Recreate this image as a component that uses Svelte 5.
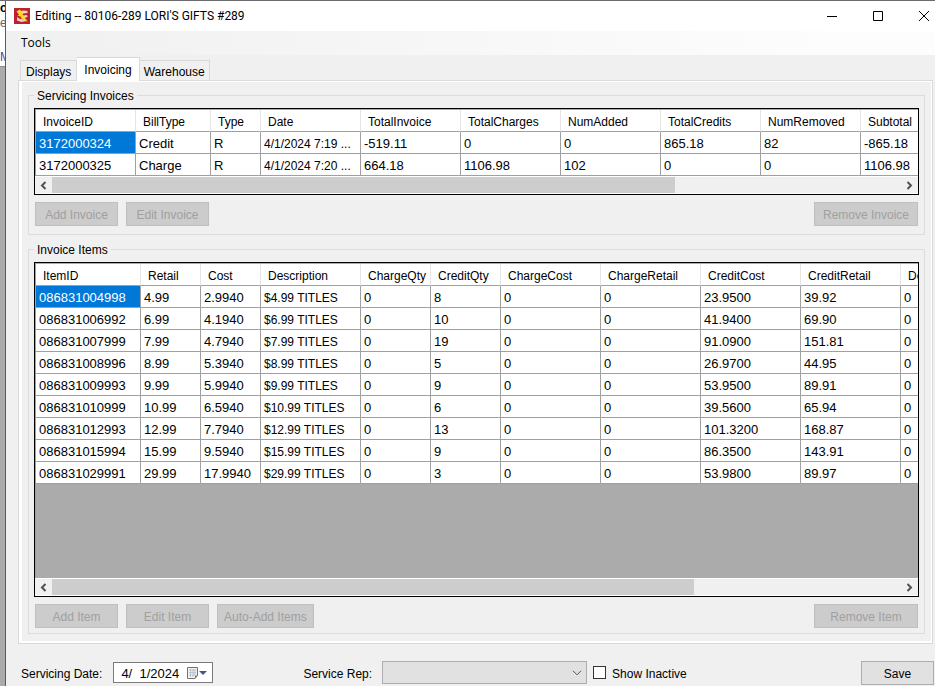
<script>
  let showInactive = $state(false);
  let servicingDate = $state("4/  1/2024");
  let activeTab = $state("Invoicing");

  const tabs = ["Displays", "Invoicing", "Warehouse"];

  const invoices = {
    label: "Servicing Invoices",
    thumb: 73.4,
    columns: [
      ["InvoiceID", 100],
      ["BillType", 75],
      ["Type", 50],
      ["Date", 100],
      ["TotalInvoice", 100],
      ["TotalCharges", 100],
      ["NumAdded", 100],
      ["TotalCredits", 100],
      ["NumRemoved", 100],
      ["Subtotal", 100],
    ],
    rows: [
      ["3172000324", "Credit", "R", "4/1/2024 7:19 ...", "-519.11", "0", "0", "865.18", "82", "-865.18"],
      ["3172000325", "Charge", "R", "4/1/2024 7:20 ...", "664.18", "1106.98", "102", "0", "0", "1106.98"],
    ],
    actions: ["Add Invoice", "Edit Invoice"],
    remove: "Remove Invoice",
  };

  const items = {
    label: "Invoice Items",
    thumb: 75.6,
    columns: [
      ["ItemID", 105],
      ["Retail", 60],
      ["Cost", 60],
      ["Description", 100],
      ["ChargeQty", 70],
      ["CreditQty", 70],
      ["ChargeCost", 100],
      ["ChargeRetail", 100],
      ["CreditCost", 100],
      ["CreditRetail", 100],
      ["De", 100],
    ],
    rows: [
      ["086831004998", "4.99", "2.9940", "$4.99 TITLES", "0", "8", "0", "0", "23.9500", "39.92", "0"],
      ["086831006992", "6.99", "4.1940", "$6.99 TITLES", "0", "10", "0", "0", "41.9400", "69.90", "0"],
      ["086831007999", "7.99", "4.7940", "$7.99 TITLES", "0", "19", "0", "0", "91.0900", "151.81", "0"],
      ["086831008996", "8.99", "5.3940", "$8.99 TITLES", "0", "5", "0", "0", "26.9700", "44.95", "0"],
      ["086831009993", "9.99", "5.9940", "$9.99 TITLES", "0", "9", "0", "0", "53.9500", "89.91", "0"],
      ["086831010999", "10.99", "6.5940", "$10.99 TITLES", "0", "6", "0", "0", "39.5600", "65.94", "0"],
      ["086831012993", "12.99", "7.7940", "$12.99 TITLES", "0", "13", "0", "0", "101.3200", "168.87", "0"],
      ["086831015994", "15.99", "9.5940", "$15.99 TITLES", "0", "9", "0", "0", "86.3500", "143.91", "0"],
      ["086831029991", "29.99", "17.9940", "$29.99 TITLES", "0", "3", "0", "0", "53.9800", "89.97", "0"],
    ],
    actions: ["Add Item", "Edit Item", "Auto-Add Items"],
    remove: "Remove Item",
  };

  // long text columns use the smaller size
  const compact = ["Date", "Description"];

  const tableWidth = (columns) => columns.reduce((sum, c) => sum + c[1], 0);
</script>

{#snippet group(data, fill)}
  <fieldset class:fill>
    <legend>{data.label}</legend>
    <div class="grid" class:fill>
      <div class="viewport">
        <table style="width: {tableWidth(data.columns)}px">
          <colgroup>
            {#each data.columns as [name, width] (name)}
              <col style="width: {width}px" />
            {/each}
          </colgroup>
          <thead>
            <tr>
              {#each data.columns as [name] (name)}
                <th>{name}</th>
              {/each}
            </tr>
          </thead>
          <tbody>
            {#each data.rows as row, r}
              <tr>
                {#each row as cell, c}
                  <td
                    class:selected={r === 0 && c === 0}
                    class:compact={compact.includes(data.columns[c][0])}>{cell}</td
                  >
                {/each}
              </tr>
            {/each}
          </tbody>
        </table>
      </div>
      <div class="scrollbar">
        <button class="arrow" aria-label="Scroll left">
          <svg width="7" height="9" viewBox="0 0 7 9"><path d="M5.500 1 2 4.500 5.500 8" /></svg>
        </button>
        <div class="track">
          <div class="thumb" style="width: {data.thumb}%"></div>
        </div>
        <button class="arrow" aria-label="Scroll right">
          <svg width="7" height="9" viewBox="0 0 7 9"><path d="M1.500 1 5 4.500 1.500 8" /></svg>
        </button>
      </div>
    </div>
    <div class="actions">
      {#each data.actions as action (action)}
        <button class="btn" disabled>{action}</button>
      {/each}
      <button class="btn remove" disabled>{data.remove}</button>
    </div>
  </fieldset>
{/snippet}

<div class="desktop">
  <div class="behind" aria-hidden="true">
    <div class="paper">
      <b>o</b>
      <span class="dim">es</span>
      <span class="blue">Ma</span>
    </div>
  </div>

  <div class="window">
    <header class="titlebar">
      <svg class="logo" width="16" height="16" viewBox="0 0 16 16">
        <rect width="16" height="16" fill="#b8242a" />
        <path
          d="M6 3.500 9 2.500l4.500.500v2L9 5.500zM9 7.500l4-.5.500 2-3 .5zM3 9l3 2 6.500.5v1.500l-5 1-4.500-1.500z"
          fill="#f0cfca"
        />
        <path
          d="M2.500 3.500 6 1.500 9.500 6 8.500 6.500 12 10l-1 .5 3 3.500-7.500-4 1-1L3.500 7.500 5 6.500z"
          fill="#ffd91f"
        />
      </svg>
      <h1>Editing -- 80106-289 LORI'S GIFTS #289</h1>
      <div class="controls">
        <button aria-label="Minimize">
          <svg width="10" height="10" viewBox="0 0 10 10"><path d="M0 5.500h10" /></svg>
        </button>
        <button aria-label="Maximize">
          <svg width="10" height="10" viewBox="0 0 10 10"><path d="M.5.5h9v9h-9z" /></svg>
        </button>
        <button aria-label="Close">
          <svg width="10" height="10" viewBox="0 0 10 10"><path d="m0 0 10 10M10 0 0 10" /></svg>
        </button>
      </div>
    </header>

    <nav class="menu">
      <button>Tools</button>
    </nav>

    <div class="tabs" role="tablist">
      {#each tabs as tab (tab)}
        <button
          role="tab"
          class="tab"
          class:active={tab === activeTab}
          aria-selected={tab === activeTab}
          onclick={() => (activeTab = tab)}>{tab}</button
        >
      {/each}
    </div>

    <main class="panel">
      {@render group(invoices, false)}
      {@render group(items, true)}
    </main>

    <footer>
      <label for="date">Servicing Date:</label>
      <div class="datebox">
        <input id="date" type="text" bind:value={servicingDate} />
        <button aria-label="Open calendar">
          <svg width="22" height="14" viewBox="0 0 22 14">
            <path d="M1.500 1.500h10v8l-2.500 3H1.500z" fill="#f4f4f4" stroke="#766c6c" />
            <path d="M3 4h7M3 6.500h7M3 9h6M4.500 3v8M7 3v8M9 3v6" fill="none" stroke="#b9c2d0" />
            <path d="M9 12.500v-3h2.500z" fill="#766c6c" />
            <path d="M13 5h8l-4 4z" fill="#3f5a87" />
          </svg>
        </button>
      </div>
      <label class="rep" for="rep">Service Rep:</label>
      <div class="combo">
        <select id="rep"><option></option></select>
        <svg width="10" height="6" viewBox="0 0 10 6"><path d="m1 .8 4 4 4-4" /></svg>
      </div>
      <input id="inactive" type="checkbox" bind:checked={showInactive} />
      <label for="inactive">Show Inactive</label>
      <button class="btn save">Save</button>
    </footer>
  </div>
</div>

<style>
  :global(body) {
    margin: 0;
    background: #f0f0f0;
  }
  * {
    box-sizing: border-box;
  }
  button,
  input,
  select {
    font: inherit;
    color: inherit;
    margin: 0;
  }
  svg {
    display: block;
  }
  .desktop {
    display: flex;
    min-height: 100vh;
    border-top: 1px solid #6b6b6b;
    font: 12px/15px "Liberation Sans", Arial, sans-serif;
    color: #000;
  }
  .behind {
    flex: none;
    width: 6px;
    overflow: hidden;
    background: #ababab;
    border-right: 1px solid #5a5a5a;
  }
  .paper {
    display: flex;
    flex-direction: column;
    height: 66px;
    background: #fff;
    border-bottom: 1px solid #8a8a8a;
  }
  .paper .dim {
    color: #666;
  }
  .paper .blue {
    margin-top: 19px;
    color: #4a4a9c;
  }
  .window {
    flex: 1;
    min-width: 0;
    display: flex;
    flex-direction: column;
    background: #f0f0f0;
  }

  .titlebar {
    display: flex;
    align-items: center;
    height: 30px;
    padding-left: 8px;
    background: #fff;
  }
  h1 {
    flex: 1;
    margin: 0 0 0 5px;
    font-family: Roboto, "Segoe UI", sans-serif;
    font-size: 12px;
    font-weight: 400;
    white-space: nowrap;
  }
  .controls {
    display: flex;
  }
  .controls button {
    display: flex;
    align-items: center;
    justify-content: center;
    width: 46px;
    height: 28px;
    padding: 0;
    border: 0;
    background: none;
  }
  .controls button:last-child {
    width: 34px;
    padding-left: 11px;
  }
  .controls path {
    fill: none;
    stroke: #000;
  }

  .menu {
    height: 24px;
    padding-left: 11px;
    background: linear-gradient(to right, #f0f0f0, #fdfdfd 90%);
    font-family: "Open Sans", "Segoe UI", sans-serif;
  }
  .menu button {
    height: 24px;
    padding: 0 4px 2px;
    border: 0;
    background: none;
  }

  .tabs {
    display: flex;
    align-items: flex-end;
    height: 25px;
    padding-left: 14px;
  }
  .tab {
    height: 20px;
    padding: 3px 5px 0;
    border: 1px solid #d9d9d9;
    border-bottom: 0;
    background: #f0f0f0;
  }
  .tab + .tab {
    border-left: 0;
    padding: 3px 4px 0;
  }
  .tab.active {
    z-index: 1;
    height: 24px;
    margin-bottom: -1px;
    padding: 2px 7px 0;
    background: #fff;
  }

  .panel {
    flex: 1;
    display: flex;
    flex-direction: column;
    gap: 7px;
    margin: 0 2px 0 12px;
    padding: 7px 7px 9px 9px;
    border: 1px solid #d9d9d9;
    box-shadow:
      inset 3px 0 #fff,
      inset -1px 1px #fff,
      inset 0 -2px #fff;
  }
  fieldset {
    display: flex;
    flex-direction: column;
    gap: 7px;
    min-width: 0;
    margin: 0;
    padding: 5px 5px 8px;
    border: 1px solid #dcdcdc;
  }
  fieldset.fill {
    flex: 1;
    padding-bottom: 5px;
  }
  legend {
    padding: 2px 3px 0;
    line-height: 13px;
  }
  .grid {
    display: flex;
    flex-direction: column;
    border: 1px solid #000;
    background: #ababab;
  }
  .grid.fill {
    flex: 1;
  }
  .viewport {
    flex: 1;
    overflow: hidden;
    padding-top: 1px;
    border-left: 1px solid #a0a0a0;
  }
  table {
    table-layout: fixed;
    border-collapse: separate;
    border-spacing: 0;
    background: #fff;
    font-size: 13px;
  }
  th,
  td {
    height: 22px;
    padding: 2px 0 0 3px;
    border-right: 1px solid #a0a0a0;
    border-bottom: 1px solid #a0a0a0;
    overflow: hidden;
    text-align: left;
    white-space: nowrap;
  }
  th,
  .compact {
    padding-top: 4px;
    font-size: 12px;
  }
  th {
    padding-left: 7px;
    border-right-color: #e5e5e5;
    font-weight: 400;
  }
  .selected {
    background: #0078d7;
    color: #fff;
  }
  .scrollbar {
    display: flex;
    height: 18px;
    border-top: 1px solid #fff;
    border-bottom: 1px solid #fff;
    background: #f0f0f0;
  }
  .arrow {
    display: flex;
    align-items: center;
    justify-content: center;
    width: 17px;
    padding: 0;
    border: 0;
    background: none;
  }
  .arrow path {
    fill: none;
    stroke: #505050;
    stroke-width: 2;
  }
  .track {
    flex: 1;
  }
  .thumb {
    height: 100%;
    background: #cdcdcd;
  }
  .actions {
    display: flex;
    gap: 8px;
    padding: 0 1px;
  }
  .btn {
    min-width: 83px;
    height: 24px;
    padding: 3px 6px 0;
    border: 1px solid #adadad;
    background: #e1e1e1;
    white-space: nowrap;
  }
  .btn:disabled {
    border-color: #bfbfbf;
    background: #ccc;
    color: #a0a0a0;
  }
  .remove {
    width: 104px;
    margin-left: auto;
  }

  footer {
    display: flex;
    align-items: center;
    height: 42px;
    padding: 15px 1px 0 15px;
  }
  footer label {
    padding-top: 3px;
  }
  .datebox {
    display: flex;
    align-items: center;
    width: 100px;
    height: 21px;
    margin-left: 11px;
    border: 1px solid #7a7a7a;
    background: #fff;
  }
  .datebox input {
    flex: 1;
    min-width: 0;
    height: 19px;
    padding: 2px 0 0 7px;
    border: 0;
    background: none;
    font-size: 13px;
    outline: 0;
  }
  .datebox button {
    padding: 0 4px 0 0;
    border: 0;
    background: none;
  }
  .rep {
    margin-left: 90px;
  }
  .combo {
    display: flex;
    align-items: center;
    width: 205px;
    height: 23px;
    margin-left: 10px;
    padding-right: 4px;
    border: 1px solid #adadad;
    background: #e1e1e1;
  }
  .combo select {
    flex: 1;
    height: 21px;
    border: 0;
    background: none;
    appearance: none;
  }
  .combo path {
    fill: none;
    stroke: #505050;
  }
  #inactive {
    width: 13px;
    height: 13px;
    margin: 0 6px;
    border: 1px solid #333;
    background: #fff;
    appearance: none;
  }
  #inactive:checked {
    box-shadow: inset 0 0 0 2px #fff;
    background: #333;
  }
  .save {
    min-width: 73px;
    margin-left: auto;
  }
</style>
